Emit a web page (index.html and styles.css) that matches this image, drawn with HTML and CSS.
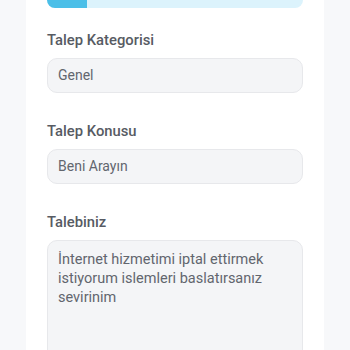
FILE: index.html
```html
<!DOCTYPE html>
<html lang="tr">
<head>
<meta charset="utf-8">
<link rel="stylesheet" href="styles.css">
</head>
<body>
<div class="card">
  <div class="progress"><div class="progress-fill"></div></div>
  <div class="field">
    <label class="label">Talep Kategorisi</label>
    <div class="input">Genel</div>
  </div>
  <div class="field">
    <label class="label">Talep Konusu</label>
    <div class="input">Beni Arayın</div>
  </div>
  <div class="field">
    <label class="label">Talebiniz</label>
    <div class="textarea">İnternet hizmetimi iptal ettirmek istiyorum islemleri baslatırsanız sevirinim</div>
  </div>
</div>
</body>
</html>
```
FILE: styles.css
```css
html, body {
  margin: 0;
  padding: 0;
  background: #f7f8fa;
  font-family: Roboto, "Liberation Sans", sans-serif;
  overflow: hidden;
}
.card {
  margin: 0 26px;
  background: #ffffff;
  padding: 0 21px 40px;
  min-height: 400px;
}
.progress {
  height: 16px;
  margin-top: -8px;
  border-radius: 8px;
  background: #dcf3fc;
  overflow: hidden;
  margin-bottom: 22px;
}
.progress-fill {
  width: 40px;
  height: 100%;
  background: #4bbfe8;
}
.field {
  display: flex;
  flex-direction: column;
  gap: 8px;
  margin-bottom: 28px;
}
.label {
  font-size: 14.8px;
  line-height: 20px;
  font-weight: 500;
  color: #575b63;
}
.input, .textarea {
  box-sizing: border-box;
  background: #f4f5f7;
  border: 1px solid #e7e8eb;
  border-radius: 10px;
  padding: 0 10px;
  font-size: 14px;
  color: #62666e;
}
.input {
  height: 35px;
  line-height: 33px;
}
.textarea {
  height: 140px;
  padding: 9px 24px 9px 10px;
  line-height: 19px;
  font-size: 14.5px;
}
```
